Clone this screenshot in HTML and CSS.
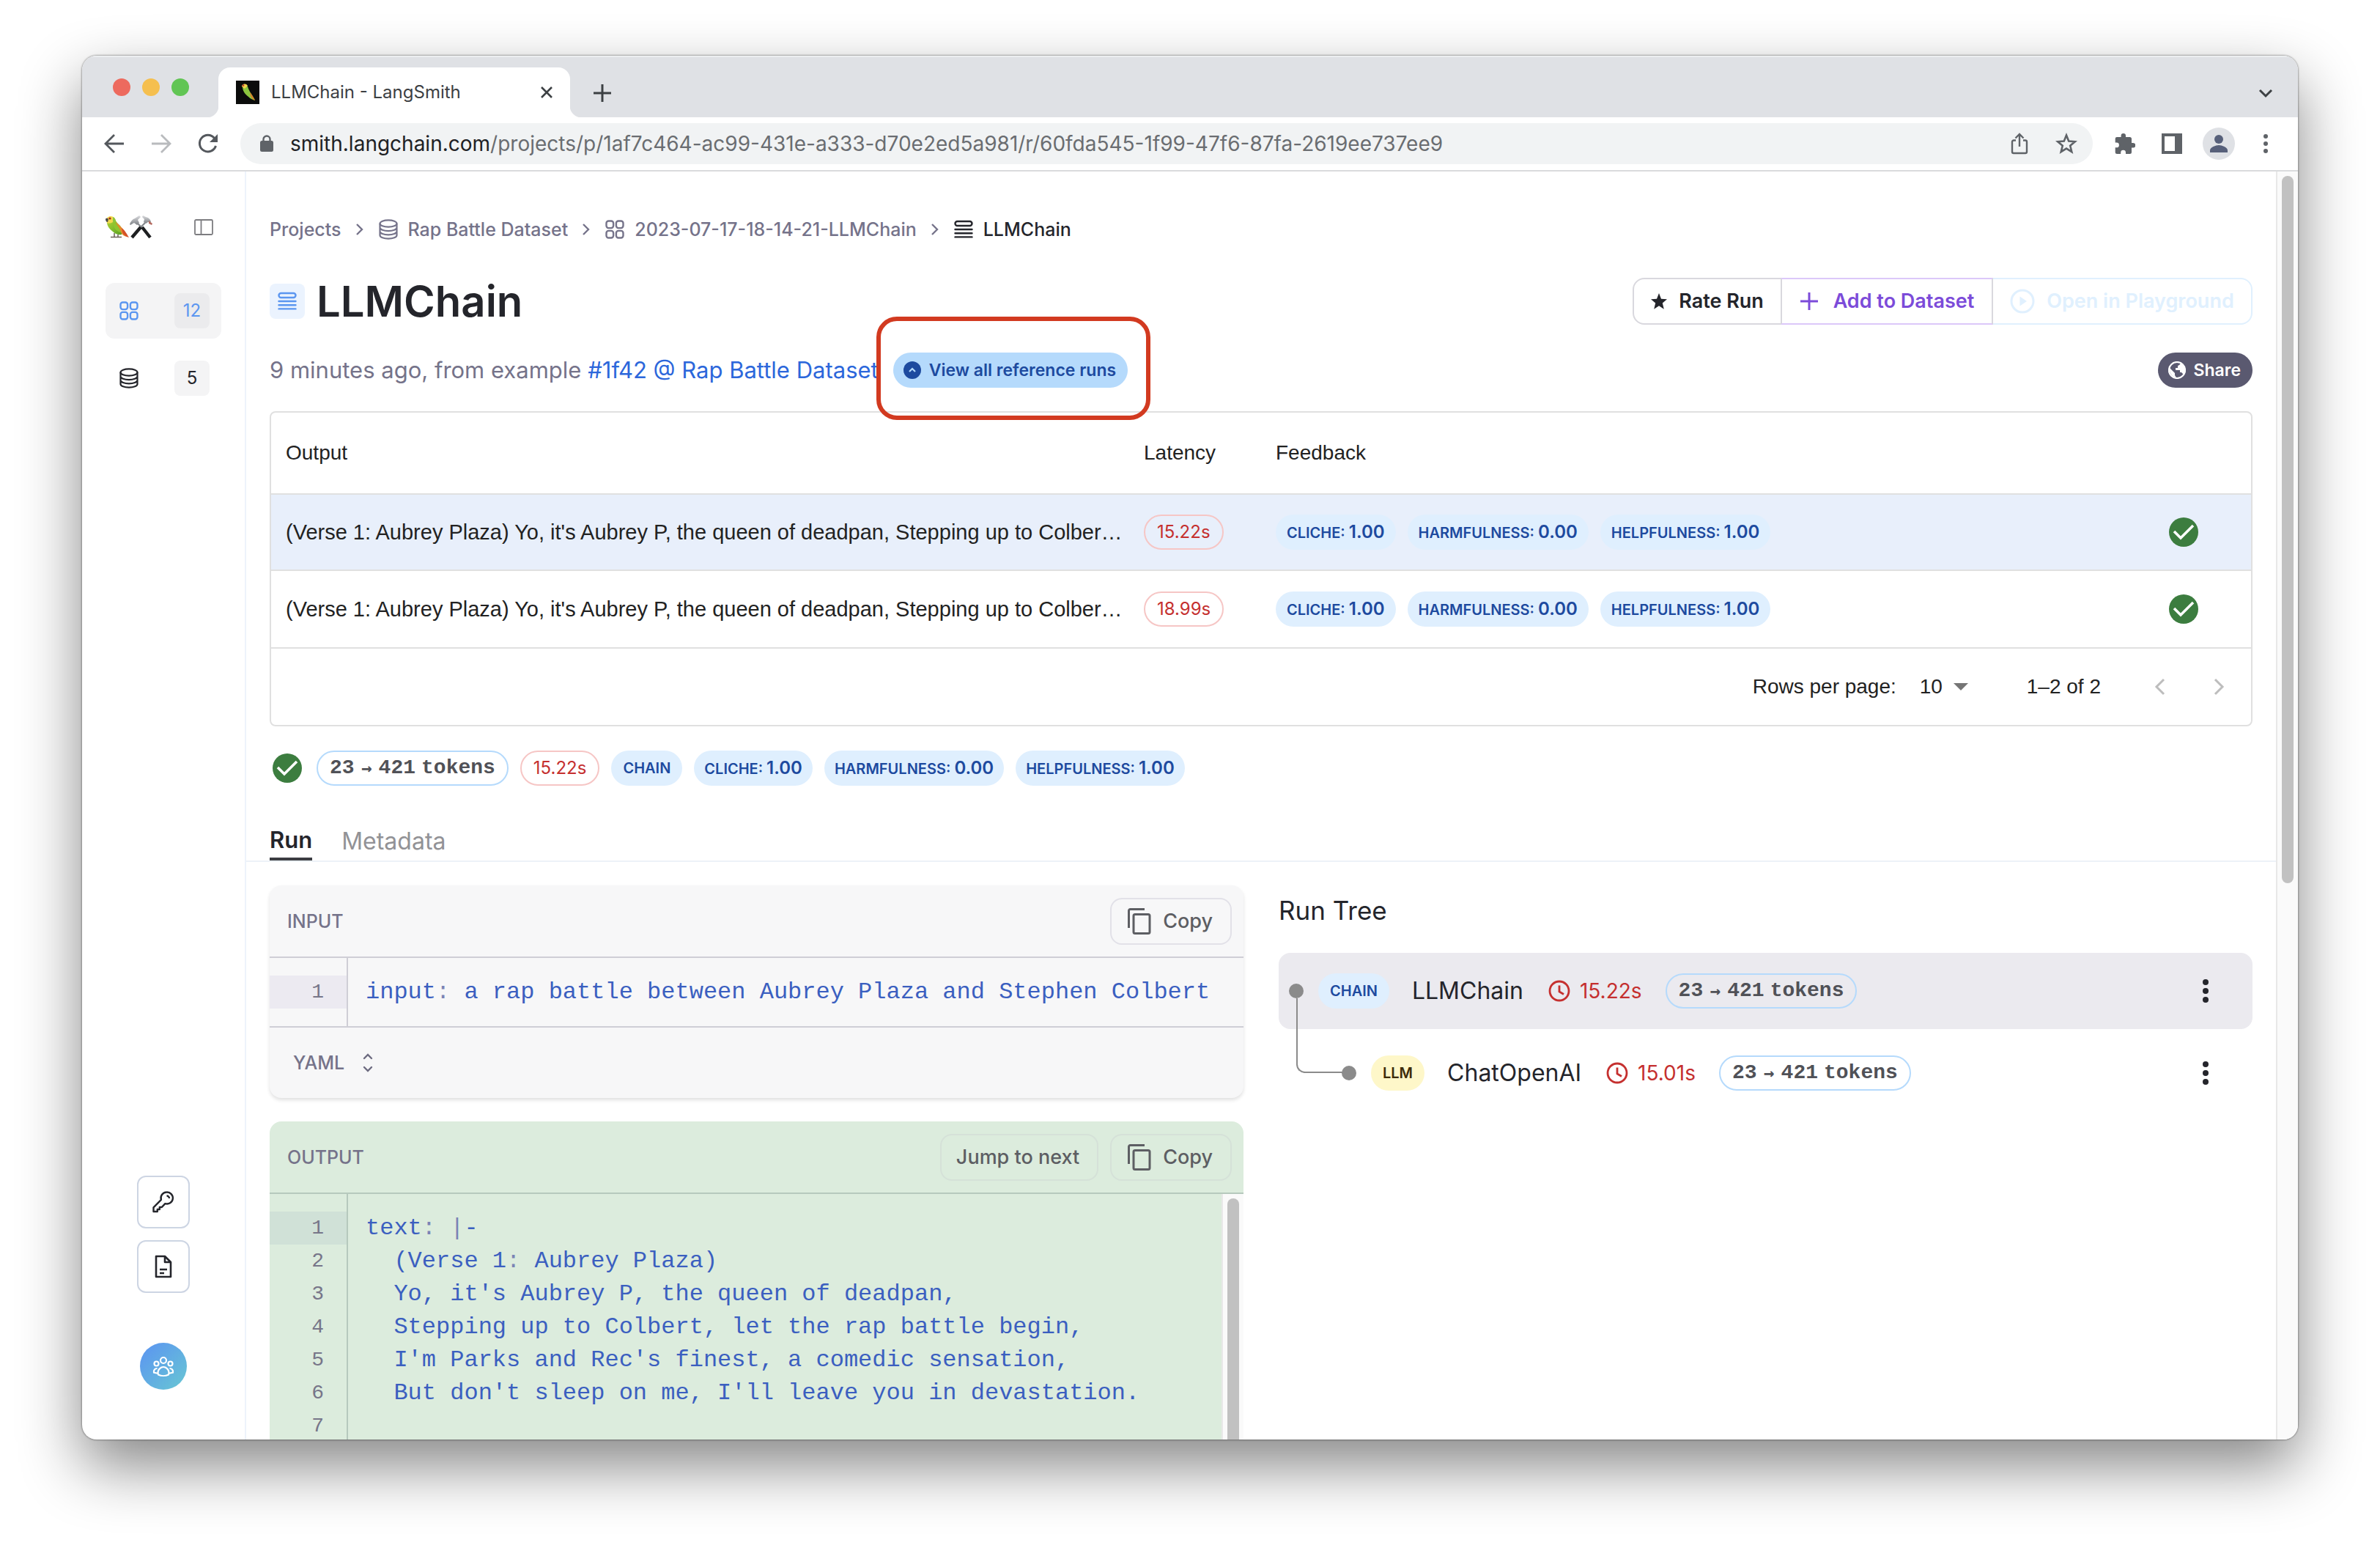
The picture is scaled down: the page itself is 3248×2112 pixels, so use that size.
FILE: index.html
```html
<!DOCTYPE html>
<html lang="en">
<head>
<meta charset="utf-8">
<meta name="viewport" content="width=device-width, initial-scale=1">
<title>LLMChain - LangSmith</title>
<link rel="stylesheet" href="styles.css">
</head>
<body>
<svg class="sprite" aria-hidden="true">
  <symbol id="i-db" viewBox="0 0 28 28" fill="none" stroke="currentColor" stroke-width="2.2">
    <ellipse cx="14" cy="6" rx="11.5" ry="4.6"/>
    <path d="M2.500 6v16c0 2.600 5.200 4.600 11.500 4.600s11.500-2 11.500-4.600V6M2.500 11.500c0 2.500 5.200 4.600 11.500 4.600s11.500-2.100 11.500-4.600M2.500 16.800c0 2.500 5.200 4.600 11.500 4.600s11.500-2.100 11.500-4.600"/>
  </symbol>
  <symbol id="i-grid" viewBox="0 0 28 28" fill="none" stroke="currentColor" stroke-width="2.4">
    <rect x="2.500" y="2.500" width="9.600" height="9.600" rx="3"/><rect x="15.900" y="2.500" width="9.600" height="9.600" rx="3"/>
    <rect x="2.500" y="15.900" width="9.600" height="9.600" rx="3"/><rect x="15.900" y="15.900" width="9.600" height="9.600" rx="3"/>
  </symbol>
  <symbol id="i-list" viewBox="0 0 28 28" fill="none" stroke="currentColor" stroke-width="2.400" stroke-linecap="round">
    <rect x="2.500" y="3" width="23" height="6" rx="3"/><path d="M2.500 14h23M2.500 19.200h23M2.500 24.400h23"/>
  </symbol>
  <symbol id="i-chev" viewBox="0 0 12 20" fill="none" stroke="currentColor" stroke-width="2.400"><path d="M2 3l7 7-7 7"/></symbol>
  <symbol id="i-check" viewBox="0 0 40 40"><circle cx="20" cy="20" r="20" fill="#3c7d3f"/><path d="M7 19l9 9 17-17" fill="none" stroke="#fff" stroke-width="3.600"/></symbol>
  <symbol id="i-copy" viewBox="0 0 36 40" fill="none" stroke="currentColor" stroke-width="3"><path d="M3.500 29V5.500a2 2 0 0 1 2-2H25"/><rect x="10" y="10.500" width="22" height="26" rx="2"/></symbol>
  <symbol id="i-clock" viewBox="0 0 30 30" fill="none" stroke="currentColor" stroke-width="2.800"><circle cx="15" cy="15" r="13"/><path d="M15 7.500V16l6 3.500"/></symbol>
  <symbol id="i-more" viewBox="0 0 10 34" fill="currentColor"><circle cx="5" cy="5" r="4"/><circle cx="5" cy="17" r="4"/><circle cx="5" cy="29" r="4"/></symbol>
</svg>

<div class="window">
  <header class="tabstrip">
    <div class="lights"><span class="light red"></span><span class="light amber"></span><span class="light green"></span></div>
    <div class="tab">
      <svg class="favicon" viewBox="0 0 32 32" aria-hidden="true"><path fill="#0b0c0b" d="M0 0h32v32H0z"/><path fill="#8cc63f" d="M9 8c3-4 7-2 8 3 2 5 6 9 9 16-3-1-6-2-9-5-5-4-8-8-8-14z"/><path fill="#f4d34c" d="M8 8c0-4 6-5 8-1l-4 4z"/><path fill="#d9822b" d="M19 16c3 3 5 7 7 11-4-2-7-6-7-11z"/><circle cx="10" cy="6.500" r="1.300" fill="#c0392b"/></svg>
      <span class="tab-title">LLMChain - LangSmith</span>
      <button class="plain" aria-label="Close tab"><svg width="20" height="20" viewBox="0 0 20 20" fill="none" stroke="#3c4043" stroke-width="2.600"><path d="M3 3l14 14M17 3L3 17"/></svg></button>
    </div>
    <button class="plain newtab" aria-label="New tab"><svg width="24" height="24" viewBox="0 0 24 24" stroke="#3c4043" stroke-width="3"><path d="M12 0v24M0 12h24"/></svg></button>
    <button class="plain tabsearch" aria-label="Search tabs"><svg width="20" height="14" viewBox="0 0 20 14" fill="none" stroke="#3c4043" stroke-width="3"><path d="M2 3l8 8 8-8"/></svg></button>
  </header>

  <nav class="toolbar" aria-label="Browser">
    <div class="navbtns">
      <button class="plain" aria-label="Back"><svg width="28" height="28" viewBox="0 0 28 28" fill="none" stroke="#54585d" stroke-width="2.800"><path d="M27 14H3M14 2L2 14l12 12"/></svg></button>
      <button class="plain" aria-label="Forward"><svg width="28" height="28" viewBox="0 0 28 28" fill="none" stroke="#b9bbbe" stroke-width="2.800"><path d="M1 14h24M14 2l12 12-12 12"/></svg></button>
      <button class="plain" aria-label="Reload"><svg width="28" height="28" viewBox="0 0 28 28" fill="none" stroke="#54585d" stroke-width="3"><path d="M24.500 17A11.300 11.300 0 1 1 22.500 6.500"/><path d="M27 1v11H16z" fill="#54585d" stroke="none"/></svg></button>
    </div>
    <div class="omnibox">
      <svg width="18" height="24" viewBox="0 0 18 24" aria-hidden="true"><rect y="8" width="18" height="15" rx="2.500" fill="#5f6368"/><path d="M4.500 9V6a4.500 4.500 0 0 1 9 0v3" fill="none" stroke="#5f6368" stroke-width="2.400"/></svg>
      <span class="url"><b>smith.langchain.com</b>/projects/p/1af7c464-ac99-431e-a333-d70e2ed5a981/r/60fda545-1f99-47f6-87fa-2619ee737ee9</span>
      <button class="plain" aria-label="Share page"><svg width="28" height="30" viewBox="0 0 28 30" fill="none" stroke="#5f6368" stroke-width="2.400"><path d="M9 10.500H6a2 2 0 0 0-2 2V26a2 2 0 0 0 2 2h16a2 2 0 0 0 2-2V12.500a2 2 0 0 0-2-2h-3M14 19V2.500M8.500 7.500L14 2l5.500 5.500"/></svg></button>
      <button class="plain" aria-label="Bookmark"><svg width="30" height="30" viewBox="0 0 30 30" fill="none" stroke="#5f6368" stroke-width="2.600"><path d="M15 3.500l3.200 8 8.600.7-6.600 5.500 2.100 8.400L15 21.600l-7.300 4.500 2.100-8.400-6.600-5.500 8.600-.7z"/></svg></button>
    </div>
    <div class="exticons">
      <button class="plain" aria-label="Extensions"><svg width="28" height="28" viewBox="0 0 28 28" fill="#5f6368"><path d="M25 13h-2V7.500A2.500 2.500 0 0 0 20.500 5H15V3.300a3.200 3.200 0 0 0-6.400 0V5H3.200A2.400 2.400 0 0 0 .7 7.500v5h1.800a3.400 3.400 0 0 1 0 6.800H.7V25.500A2.500 2.500 0 0 0 3.200 28h5v-1.800a3.400 3.400 0 0 1 6.800 0V28h5.500a2.500 2.500 0 0 0 2.500-2.500v-5.900h2a3.300 3.300 0 0 0 0-6.600z"/></svg></button>
      <button class="plain" aria-label="Side panel"><svg width="28" height="28" viewBox="0 0 28 28" fill="#5f6368"><path d="M0 0h28v28H0zM4 4v20h14V4z" fill-rule="evenodd"/></svg></button>
      <button class="plain" aria-label="Profile"><svg width="44" height="44" viewBox="0 0 44 44"><circle cx="22" cy="22" r="22" fill="#dfe1e5"/><circle cx="22" cy="16" r="6" fill="#57607a"/><path d="M10 34v-3c0-4 8-7 12-7s12 3 12 7v3z" fill="#57607a"/></svg></button>
      <button class="plain" aria-label="Menu"><svg width="8" height="28" viewBox="0 0 8 28" fill="#5f6368"><circle cx="4" cy="4" r="3"/><circle cx="4" cy="14" r="3"/><circle cx="4" cy="24" r="3"/></svg></button>
    </div>
  </nav>

  <div class="app">
    <aside class="sidebar">
      <div class="brand">
        <svg class="logo" viewBox="0 0 64 32" aria-label="LangSmith" role="img">
          <defs>
            <linearGradient id="feather" x1="0" y1="0" x2="1" y2="1"><stop offset="0" stop-color="#b5d334"/><stop offset=".55" stop-color="#7dbb2c"/><stop offset="1" stop-color="#5a9a26"/></linearGradient>
            <linearGradient id="steel" x1="0" y1="0" x2="0" y2="1"><stop offset="0" stop-color="#dcdde0"/><stop offset="1" stop-color="#7e8186"/></linearGradient>
          </defs>
          <path fill="url(#feather)" d="M2 9C6 8 11 6 13 5c1 3 3 5 6 8 4 4 5 9 3 13-3 1-8 0-12-4-5-4-8-8-8-13z"/>
          <path fill="#e58a2c" d="M14 9c6 5 12 10 16 20-4 0-8-3-10-8-1-5-5-7-6-12z"/>
          <path fill="#d4502a" d="M22 17c5 4 7 8 10 13-4-1-8-4-9-8z"/>
          <path fill="#8fc52f" d="M11 9c5 3 8 8 10 14-6-1-11-6-10-14z"/>
          <path fill="#f2d94e" d="M1 7C1 1 8-1 12 3c2 2 1 5-2 6-3 2-6 2-8 1z"/>
          <path fill="#8cc63f" d="M10 2c3 1 4 4 4 6l-4 1z"/>
          <path fill="#4a4a4a" d="M0 5c1-2 3-1 4 0L3 9C1 9 0 7 0 5z"/>
          <circle cx="6" cy="4" r="1.600" fill="#a8261b"/>
          <path d="M12 24v5M17 26v3M7 29.500h15" stroke="#6b6258" stroke-width="1.500" fill="none"/>
          <path d="M43 10l10 10M54 10L44 20" stroke="#85888c" stroke-width="2.200"/>
          <path d="M50 16l11 14M48 16L36 30" stroke="#1e1f21" stroke-width="4.400"/>
          <path fill="url(#steel)" d="M33 12c1-4 4-7 7-8l6-4 2 2-4 4 2 4-3 3-4-3-5 3z"/>
          <path fill="url(#steel)" d="M62 9c0-3-3-6-7-7l-4-2-1 2 3 3-1 4 3 2 3-2z"/>
          <path fill="#b56c62" d="M59 7l5 4-1 2-4-2z"/>
        </svg>
        <button class="plain" aria-label="Collapse sidebar"><svg width="26" height="22" viewBox="0 0 26 22" fill="none" stroke="#7d7d80" stroke-width="1.800"><rect x="1" y="1" width="24" height="20" rx="1.500"/><path d="M9.500 1v20"/></svg></button>
      </div>
      <nav class="sidenav" aria-label="Main">
        <a href="#" class="navitem active"><svg class="i28"><use href="#i-grid"/></svg><span class="count">12</span></a>
        <a href="#" class="navitem"><svg class="i28"><use href="#i-db"/></svg><span class="count">5</span></a>
      </nav>
      <div class="sidefoot">
        <button class="square" aria-label="API keys"><svg width="32" height="32" viewBox="0 0 32 32" fill="none" stroke="#24252b" stroke-width="2.400" stroke-linejoin="round"><path d="M20.500 2.500a8 8 0 0 0-7.600 10.400L2.500 23.300V29h5.300v-3h3v-3h3l4.600-4.900A8 8 0 1 0 20.500 2.500z"/><path d="M20.500 7.500a3.500 3.500 0 0 1 3.500 3.500"/></svg></button>
        <button class="square" aria-label="Documentation"><svg width="24" height="32" viewBox="0 0 24 32" fill="none" stroke="#24252b" stroke-width="2.600" stroke-linejoin="round"><path d="M2 2h12l8 8v20H2zM14 2v8h8M7 20h10M7 25h6"/></svg></button>
        <button class="avatar" aria-label="Organization"><svg width="30" height="30" viewBox="0 0 30 30" fill="none" stroke="#fff" stroke-width="2.200"><circle cx="15" cy="7" r="4"/><circle cx="5.500" cy="11.500" r="3"/><circle cx="24.500" cy="11.500" r="3"/><path d="M8 26.500c-2-6 3-10.500 7-10.500s9 4.500 7 10.500c-4 2-10 2-14 0zM6.500 18c-3 0-5 2-4.500 5.500l5 1.200M23.500 18c3 0 5 2 4.500 5.500l-5 1.200"/></svg></button>
      </div>
    </aside>

    <main class="main">
      <nav class="crumbs" aria-label="Breadcrumb">
        <a href="#">Projects</a>
        <svg class="sep"><use href="#i-chev"/></svg>
        <a href="#"><svg class="i28"><use href="#i-db"/></svg>Rap Battle Dataset</a>
        <svg class="sep"><use href="#i-chev"/></svg>
        <a href="#"><svg class="i28"><use href="#i-grid"/></svg>2023-07-17-18-14-21-LLMChain</a>
        <svg class="sep"><use href="#i-chev"/></svg>
        <span class="current"><svg class="i28"><use href="#i-list"/></svg>LLMChain</span>
      </nav>

      <div class="titlebar">
        <span class="titleicon"><svg class="i28"><use href="#i-list"/></svg></span>
        <h1>LLMChain</h1>
        <div class="actions">
          <button class="rate"><svg width="22" height="22" viewBox="0 0 22 22" fill="currentColor"><path d="M11 0l3 7.700 8 .5-6.200 5.200 2 8.300L11 17.200l-6.800 4.500 2-8.300L0 8.200l8-.5z"/></svg>Rate Run</button>
          <button class="add"><svg width="26" height="26" viewBox="0 0 26 26" stroke="currentColor" stroke-width="3"><path d="M13 1v24M1 13h24"/></svg>Add to Dataset</button>
          <button class="open" disabled><svg width="34" height="34" viewBox="0 0 34 34" fill="none" stroke="currentColor" stroke-width="3"><circle cx="17" cy="17" r="15"/><path d="M13.500 10.500l9.500 6.500-9.500 6.500z" fill="currentColor" stroke="none"/></svg>Open in Playground</button>
        </div>
      </div>

      <div class="subline">
        <p>9 minutes ago, from example <a href="#">#1f42 @ Rap Battle Dataset</a></p>
        <span class="refwrap">
          <button class="refruns"><svg width="24" height="24" viewBox="0 0 24 24"><circle cx="12" cy="12" r="12" fill="#1d4a9f"/><path d="M8 14l4-4 4 4" fill="none" stroke="#b5dafc" stroke-width="2.200"/></svg>View all reference runs</button>
          <span class="callout"></span>
        </span>
        <button class="share"><svg width="24" height="24" viewBox="0 0 24 24"><circle cx="12" cy="12" r="11" fill="none" stroke="#fff" stroke-width="2.200"/><path d="M2 9l7 7v3l2 3C5 21 1 16 2 9zM12 2h5c-1 3-2 3-4 4v3h-3v3h6v3h2l3 3c3-6 2-14-5-17z" fill="#fff"/></svg>Share</button>
      </div>

      <section class="runs">
        <table>
          <colgroup><col class="c-out"><col class="c-lat"><col><col class="c-ok"></colgroup>
          <thead><tr><th>Output</th><th>Latency</th><th>Feedback</th><th aria-label="Status"></th></tr></thead>
          <tbody>
            <tr class="selected"><td class="clip">(Verse 1: Aubrey Plaza) Yo, it's Aubrey P, the queen of deadpan, Stepping up to Colber…</td><td><span class="chip time">15.22s</span></td><td><div class="chips"><span class="chip fb">CLICHE: <b>1.00</b></span><span class="chip fb">HARMFULNESS: <b>0.00</b></span><span class="chip fb">HELPFULNESS: <b>1.00</b></span></div></td><td><svg class="ok"><use href="#i-check"/></svg></td></tr>
            <tr><td class="clip">(Verse 1: Aubrey Plaza) Yo, it's Aubrey P, the queen of deadpan, Stepping up to Colber…</td><td><span class="chip time">18.99s</span></td><td><div class="chips"><span class="chip fb">CLICHE: <b>1.00</b></span><span class="chip fb">HARMFULNESS: <b>0.00</b></span><span class="chip fb">HELPFULNESS: <b>1.00</b></span></div></td><td><svg class="ok"><use href="#i-check"/></svg></td></tr>
          </tbody>
        </table>
        <div class="pager">
          <label for="rows">Rows per page:</label>
          <span class="selectbox"><select id="rows"><option>10</option></select><svg width="20" height="10" viewBox="0 0 20 10" fill="#757575"><path d="M0 0h20L10 10z"/></svg></span>
          <span class="range">1–2 of 2</span>
          <button class="plain" aria-label="Previous page" disabled><svg width="16" height="24" viewBox="0 0 16 24" fill="none" stroke="#bdbdbd" stroke-width="3"><path d="M13 2L3 12l10 10"/></svg></button>
          <button class="plain" aria-label="Next page" disabled><svg width="16" height="24" viewBox="0 0 16 24" fill="none" stroke="#bdbdbd" stroke-width="3"><path d="M3 2l10 10L3 22"/></svg></button>
        </div>
      </section>

      <div class="chips status">
        <svg class="ok"><use href="#i-check"/></svg>
        <span class="chip tokens"><span>23</span><span class="arrow">→</span><span>421</span><span>tokens</span></span>
        <span class="chip time">15.22s</span>
        <span class="chip kind">CHAIN</span>
        <span class="chip fb">CLICHE: <b>1.00</b></span><span class="chip fb">HARMFULNESS: <b>0.00</b></span><span class="chip fb">HELPFULNESS: <b>1.00</b></span>
      </div>

      <div class="tabs" role="tablist">
        <button role="tab" aria-selected="true">Run</button>
        <button role="tab" aria-selected="false">Metadata</button>
      </div>

      <div class="columns">
        <div class="panels">
          <section class="panel">
            <header><h2>INPUT</h2><button class="ghost"><svg class="copy"><use href="#i-copy"/></svg>Copy</button></header>
            <div class="code">
              <ol class="gutter"><li class="on">1</li></ol>
              <div class="lines"><pre>input<i>:</i> a rap battle between Aubrey Plaza and Stephen Colbert</pre></div>
            </div>
            <footer><select aria-label="Format"><option>YAML</option></select><svg width="14" height="26" viewBox="0 0 14 26" fill="none" stroke="#6d6b80" stroke-width="2.400" stroke-linecap="round"><path d="M2 7l5-5 5 5M2 19l5 5 5-5"/></svg></footer>
          </section>
          <section class="panel green">
            <header><h2>OUTPUT</h2><button class="ghost">Jump to next</button><button class="ghost"><svg class="copy"><use href="#i-copy"/></svg>Copy</button></header>
            <div class="code">
              <ol class="gutter"><li class="on">1</li><li>2</li><li>3</li><li>4</li><li>5</li><li>6</li><li>7</li></ol>
              <div class="lines">
                <pre>text<i>:</i> <i>|</i>-</pre>
                <pre>  (Verse 1<i>:</i> Aubrey Plaza)</pre>
                <pre>  Yo, it's Aubrey P, the queen of deadpan,</pre>
                <pre>  Stepping up to Colbert, let the rap battle begin,</pre>
                <pre>  I'm Parks and Rec's finest, a comedic sensation,</pre>
                <pre>  But don't sleep on me, I'll leave you in devastation.</pre>
              </div>
              <div class="track"><div class="thumb"></div></div>
            </div>
          </section>
        </div>
        <section class="tree">
          <h2>Run Tree</h2>
          <ul>
            <li class="node root"><span class="dot"></span><span class="chip kind">CHAIN</span><span class="name">LLMChain</span><svg class="clock"><use href="#i-clock"/></svg><span class="dur">15.22s</span><span class="chip tokens"><span>23</span><span class="arrow">→</span><span>421</span><span>tokens</span></span><button class="plain more" aria-label="More"><svg class="moreicon"><use href="#i-more"/></svg></button></li>
            <li class="node child"><span class="elbow"></span><span class="dot"></span><span class="chip kind llm">LLM</span><span class="name">ChatOpenAI</span><svg class="clock"><use href="#i-clock"/></svg><span class="dur">15.01s</span><span class="chip tokens"><span>23</span><span class="arrow">→</span><span>421</span><span>tokens</span></span><button class="plain more" aria-label="More"><svg class="moreicon"><use href="#i-more"/></svg></button></li>
          </ul>
        </section>
      </div>
    </main>
    <div class="track page"><div class="thumb"></div></div>
  </div>
</div>
</body>
</html>
```

FILE: styles.css
```css
* { box-sizing: border-box; }
body {
  margin: 0; height: 100vh; padding: 76px 112px 148px; display: flex; overflow: hidden;
  background: #fff; color: #24252b; font: 400 28px/36px Inter, "Liberation Sans", sans-serif;
}
h1, h2, p, ul, ol, pre { margin: 0; padding: 0; font-weight: 400; }
ul, ol { list-style: none; }
button, select { font: inherit; color: inherit; background: none; border: 0; margin: 0; padding: 0; appearance: none; }
button { display: inline-flex; align-items: center; justify-content: center; white-space: nowrap; }
a { color: inherit; text-decoration: none; }
svg { display: block; flex: none; }
i { font-style: normal; }
.sprite { position: absolute; width: 0; height: 0; }
.i28 { width: 28px; height: 28px; }

.window {
  flex: 1; min-width: 0; display: flex; flex-direction: column; overflow: hidden;
  border-radius: 20px; background: #fff;
  box-shadow: 0 0 2px 1px rgba(0,0,0,.3), 0 36px 84px rgba(0,0,0,.48);
}

/* browser chrome */
.tabstrip { display: flex; height: 84px; flex: none; align-items: center; background: #dfe1e5; padding: 0 34px 0 42px; border-top: 2px solid #eceef0; }
.lights { display: flex; gap: 16px; width: 144px; }
.light { width: 24px; height: 24px; border-radius: 50%; }
.red { background: #ed6a5e; } .amber { background: #f5bf4f; } .green { background: #61c554; }
.tab {
  position: relative; align-self: flex-end; display: flex; align-items: center; gap: 16px;
  width: 480px; height: 68px; padding: 0 22px 0 24px; background: #fff; border-radius: 16px 16px 0 0;
}
.tab::before, .tab::after { content: ""; position: absolute; bottom: 0; width: 16px; height: 16px; }
.tab::before { left: -16px; background: radial-gradient(circle at 0 0, #dfe1e5 16px, #fff 17px); }
.tab::after { right: -16px; background: radial-gradient(circle at 100% 0, #dfe1e5 16px, #fff 17px); }
.favicon { width: 32px; height: 32px; }
.tab-title { flex: 1; font-size: 24px; color: #3c4043; white-space: nowrap; }
.newtab { margin: 16px 0 0 32px; }
.tabsearch { margin: 16px 0 0 auto; }
.toolbar { display: flex; height: 74px; flex: none; align-items: center; padding: 0 40px 0 30px; border-bottom: 2px solid #dadbdd; }
.navbtns { display: flex; gap: 36px; width: 186px; }
.omnibox { flex: 1; min-width: 0; display: flex; align-items: center; height: 56px; padding: 0 21px 0 27px; border-radius: 28px; background: #f1f3f4; }
.omnibox button { margin-left: 35px; }
.url { flex: 1; min-width: 0; margin-left: 23px; overflow: hidden; white-space: nowrap; color: #6a6d71; }
.url b { font-weight: 400; color: #202124; }
.exticons { display: flex; align-items: center; gap: 36px; margin-left: 30px; }
.exticons button:nth-child(3) { margin: 0 -8px; }
.exticons button:nth-child(4) { margin-left: 10px; }

/* app shell */
.app { flex: 1; min-height: 0; display: flex; }
.sidebar { flex: none; width: 224px; display: flex; flex-direction: column; padding: 60px 32px 68px; border-right: 2px solid #edf3fb; }
.brand { display: flex; align-items: center; justify-content: space-between; height: 32px; padding-right: 11px; }
.logo { width: 64px; height: 32px; }
.sidenav { display: flex; flex-direction: column; gap: 16px; margin-top: 60px; }
.navitem { display: flex; align-items: center; justify-content: space-between; height: 76px; padding: 0 16px 0 18px; border-radius: 12px; }
.navitem.active { background: #f4f4f5; color: #5b96f0; }
.count { width: 48px; height: 48px; border-radius: 8px; background: #f4f4f5; font-size: 24px; line-height: 48px; text-align: center; }
.active .count { background: #ebebed; }
.sidefoot { margin-top: auto; display: flex; flex-direction: column; align-items: center; gap: 16px; }
.square { width: 72px; height: 72px; border: 2px solid #cdd5e3; border-radius: 12px; }
.avatar { width: 64px; height: 64px; border-radius: 50%; margin-top: 52px; background: linear-gradient(135deg, #5b93f2, #68c7d3); }

.main { flex: 1; min-width: 0; overflow: hidden; display: flex; flex-direction: column; padding: 60px 32px 0; }
.main > * { flex: none; }
.crumbs { display: flex; align-items: center; height: 38px; gap: 19px; font-size: 25px; font-weight: 500; color: #75738a; }
.crumbs a, .current { display: flex; align-items: center; gap: 13px; white-space: nowrap; }
.current { color: #24252b; }
.sep { width: 12px; height: 20px; }
.titlebar { display: flex; align-items: center; height: 64px; margin-top: 47px; }
.titleicon { display: grid; place-items: center; width: 48px; height: 48px; border-radius: 8px; background: #ebf3fe; color: #5b96f0; }
h1 { margin-left: 16px; font-size: 58px; line-height: 64px; font-weight: 600; }
.actions { margin-left: auto; display: flex; font-size: 27px; font-weight: 600; }
.actions button { height: 64px; border: 2px solid #d9d8de; gap: 16px; }
.rate { width: 204px; border-radius: 16px 0 0 16px; }
.actions .add { width: 290px; gap: 20px; margin-left: -2px; color: #7c4bd9; border-color: #dcc8f9 #d9d8de; }
.actions .open { width: 354px; border-color: #e0f0fe; border-left: 0; color: #e0f0fe; border-radius: 0 16px 16px 0; }
.subline { display: flex; align-items: center; height: 48px; margin-top: 38px; font-size: 31px; color: #75738a; }
.subline p { white-space: nowrap; }
.subline a { color: #2c67db; }
.refwrap { position: relative; margin-left: 20px; }
.refruns, .share { height: 48px; border-radius: 24px; gap: 11px; padding: 0 16px 0 14px; font-size: 23px; font-weight: 600; }
.refruns { background: #b5dafc; color: #1d4a9f; }
.callout { position: absolute; inset: -49px -31px -44px -23px; border: 6px solid #d23a20; border-radius: 28px; pointer-events: none; }
.share { margin-left: auto; background: #5a5970; color: #fff; }

/* reference runs */
.runs { margin-top: 32px; border: 2px solid #e0e0e0; border-radius: 8px; color: #222; font-family: "Liberation Sans", Arial, sans-serif; }
table { width: 100%; border-collapse: separate; border-spacing: 0; table-layout: fixed; }
.c-out { width: 1171px; } .c-lat { width: 180px; } .c-ok { width: 132px; }
th, td { padding: 0 20px; text-align: left; font-weight: 400; border-bottom: 2px solid #e0e0e0; }
th { height: 112px; } td { height: 104px; }
tbody tr:last-child td { height: 106px; }
.clip { overflow: hidden; white-space: nowrap; font-size: 29px; }
.selected td { background: #e8effb; }
.pager { display: flex; align-items: center; justify-content: flex-end; height: 104px; padding-right: 36px; }
.selectbox { display: flex; align-items: center; gap: 14px; margin: 0 80px 0 32px; }
.range { margin-right: 73px; }
.pager button + button { margin-left: 64px; }
.chips { display: flex; align-items: center; gap: 16px; }
.chip {
  display: inline-flex; align-items: center; height: 48px; padding: 0 16px; border-radius: 24px;
  font-family: Inter, "Liberation Sans", sans-serif; white-space: nowrap; vertical-align: middle;
}
.time { border: 2px solid #f6c6c5; color: #c5302f; font-size: 24px; }
.fb, .kind { background: #dfeffe; color: #1d4a9f; font-size: 20px; font-weight: 600; }
.fb { white-space: pre; align-items: baseline; line-height: 48px; padding: 0 15px; }
.fb b { font-size: 24px; font-weight: 600; }
.llm { background: #fef7c9; color: #3d2c0a; }
.tokens { gap: 8px; border: 2px solid #b5dafc; color: #505157; font: 700 28px/44px "Liberation Mono", "Courier New", monospace; }
.arrow { width: 17px; font: 700 24px/44px "DejaVu Sans Mono", monospace; text-align: center; }
.ok { width: 40px; height: 40px; }
.status { margin-top: 33px; }
.status .ok { margin: 0 4px; }
.status .fb { padding: 0 14px; }

.tabs { display: flex; gap: 40px; height: 62px; margin: 42px -32px 0; padding: 0 32px; border-bottom: 2px solid #edf2f8; font-size: 32px; }
.tabs button { height: 60px; padding-top: 8px; color: #929296; }
.tabs [aria-selected="true"] { color: #24252b; font-size: 31px; font-weight: 600; border-bottom: 4px solid #3c3d42; }

.columns { display: grid; grid-template-columns: 1fr 1fr; gap: 48px; margin-top: 32px; }
.panels { min-width: 0; display: flex; flex-direction: column; gap: 32px; }
.panel { --line: #cfced6; --hl: #eceaf1; background: #f7f7f8; border-radius: 16px; box-shadow: 0 3px 5px rgba(0,0,0,.12); }
.panel.green { --line: #b6c9bd; --hl: #d0e1d7; background: #dcecdd; box-shadow: none; }
.panel header { display: flex; align-items: center; gap: 16px; height: 97px; padding: 0 16px 0 24px; }
.panel h2 { flex: 1; font-size: 25px; font-weight: 500; color: #75738a; }
.ghost { height: 64px; padding: 0 24px 0 20px; border: 2px solid #e2e1e8; border-radius: 16px; font-size: 27px; font-weight: 500; color: #5d5e63; gap: 14px; }
.green .ghost { border-color: #d5e1d8; }
.copy { width: 36px; height: 40px; }
.code { display: flex; border-top: 2px solid var(--line); font: 400 32px/45px "Liberation Mono", "Courier New", monospace; color: #3b5fc0; }
.gutter { width: 107px; padding: 24px 0; border-right: 2px solid var(--line); font-size: 28px; text-align: right; color: #777689; }
.gutter li { height: 45px; padding-right: 31px; }
.gutter .on { background: var(--hl); }
.lines { flex: 1; min-width: 0; padding: 24px 0 24px 24px; overflow: hidden; }
pre { font: inherit; }
pre i { color: #7b83b5; }
.panel footer { display: flex; align-items: center; gap: 24px; height: 98px; padding-left: 32px; border-top: 2px solid var(--line); font-size: 25px; font-weight: 500; color: #75738a; }
.track { flex: none; width: 30px; padding: 6px 4px 0 6px; background: #fafafa; border-left: 2px solid #e8e8e8; }
.thumb { width: 16px; height: 100%; border-radius: 8px; background: #c1c1c1; }
.page .thumb { height: 56%; }

.tree h2 { margin-top: 14px; font-size: 35px; line-height: 40px; }
.tree ul { display: flex; flex-direction: column; gap: 8px; margin-top: 38px; }
.node { position: relative; display: flex; align-items: center; height: 104px; padding: 0 59px 0 14px; border-radius: 16px; }
.root { background: #ebeaef; }
.child { padding-left: 86px; }
.dot { width: 20px; height: 20px; border-radius: 50%; background: #8b8b8b; margin-right: 20px; }
.elbow { position: absolute; left: 24px; top: -50px; width: 64px; height: 102px; border: solid #8b8b8b; border-width: 0 0 2px 2px; border-radius: 0 0 0 12px; }
.name { margin: 0 34px 0 31px; font-size: 32px; }
.clock { width: 30px; height: 30px; color: #c5302f; }
.dur { margin: 0 32px 0 13px; font-size: 28px; color: #c5302f; }
.more { margin-left: auto; }
.moreicon { width: 10px; height: 34px; }
```
